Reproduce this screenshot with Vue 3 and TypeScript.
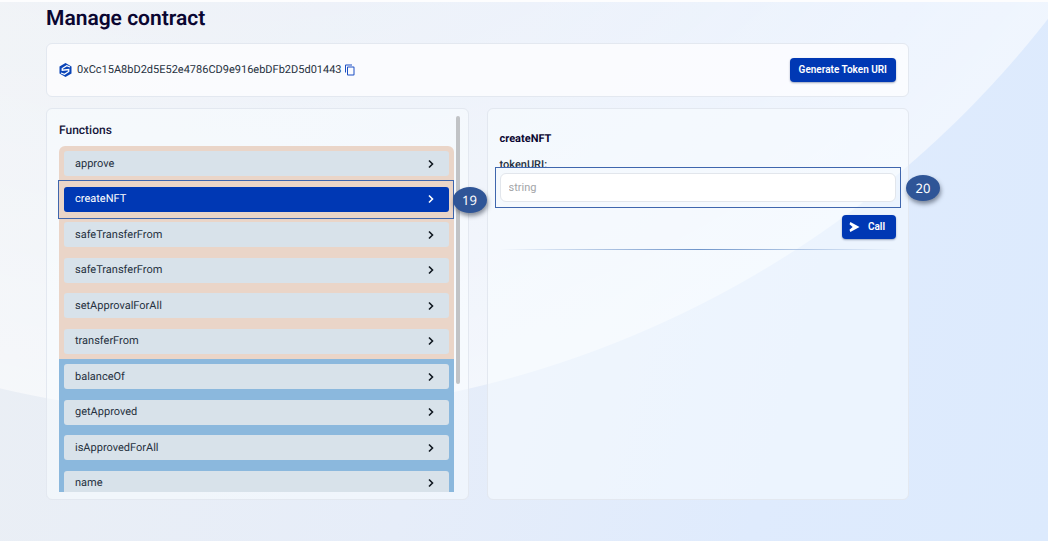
<script setup lang="ts">
import { computed, onMounted, ref } from 'vue'

interface ContractGroup {
  kind: 'write' | 'read'
  items: string[]
}

const address = '0xCc15A8bD2d5E52e4786CD9e916ebDFb2D5d01443'
const groups: ContractGroup[] = [
  {
    kind: 'write',
    items: ['approve', 'createNFT', 'safeTransferFrom', 'safeTransferFrom', 'setApprovalForAll', 'transferFrom'],
  },
  { kind: 'read', items: ['balanceOf', 'getApproved', 'isApprovedForAll', 'name'] },
]

const selected = ref('write-1')
const selectedName = computed(() => {
  const [kind, index] = selected.value.split('-')
  return groups.find((g) => g.kind === kind)?.items[Number(index)] ?? ''
})
const tokenUri = ref('')

const scroller = ref<HTMLElement | null>(null)
const thumb = ref({ height: '0%', top: '0%' })

function updateThumb(): void {
  const el = scroller.value
  if (!el) return
  thumb.value = {
    height: `${(el.clientHeight / el.scrollHeight) * 100}%`,
    top: `${(el.scrollTop / el.scrollHeight) * 100}%`,
  }
}

function copyAddress(): void {
  void navigator.clipboard?.writeText(address)
}

onMounted(updateThumb)
</script>

<template>
  <main class="page">
    <h1 class="title">Manage contract</h1>

    <section class="card address-bar">
      <svg class="logo" viewBox="0 0 26 28" aria-hidden="true">
        <path d="M13 0 25 7v14l-12 7L1 21V7z" fill="#0b45b8" />
        <path d="M22 8 15.500 5.500 6.500 11v3.500L19.500 13v4L11 22.500 4 20" fill="none" stroke="#fff" stroke-width="2.600" />
      </svg>
      <span class="address">{{ address }}</span>
      <button class="copy" type="button" aria-label="Copy address" @click="copyAddress">
        <svg viewBox="0 0 24 24" aria-hidden="true">
          <path
            fill="#1a4fc4"
            d="M16 1H4a2 2 0 0 0-2 2v14h2V3h12V1zm3 4H8a2 2 0 0 0-2 2v14a2 2 0 0 0 2 2h11a2 2 0 0 0 2-2V7a2 2 0 0 0-2-2zm0 16H8V7h11v14z"
          />
        </svg>
      </button>
      <button class="primary generate" type="button">Generate Token URI</button>
    </section>

    <div class="columns">
      <section class="card functions">
        <div ref="scroller" class="scroller" @scroll="updateThumb">
          <h2 class="heading">Functions</h2>
          <div v-for="group in groups" :key="group.kind" class="group" :class="group.kind">
            <button
              v-for="(item, i) in group.items"
              :key="i"
              type="button"
              class="item"
              :class="{ active: selected === `${group.kind}-${i}` }"
              @click="selected = `${group.kind}-${i}`"
            >
              <span>{{ item }}</span>
              <svg class="chevron" viewBox="0 0 10 10" aria-hidden="true">
                <path d="M3 1.500 6.500 5 3 8.500" fill="none" stroke="currentColor" stroke-width="1.600" />
              </svg>
            </button>
          </div>
        </div>
        <div class="track" aria-hidden="true"><div class="thumb" :style="thumb"></div></div>
        <div class="outline step-list"><span class="badge">19</span></div>
      </section>

      <section class="card details">
        <h2 class="name">{{ selectedName }}</h2>
        <label class="label" for="token-uri">tokenURI:</label>
        <div class="field">
          <input id="token-uri" v-model="tokenUri" type="text" placeholder="string" />
          <div class="outline step-field"><span class="badge">20</span></div>
        </div>
        <button class="primary call" type="button">
          <svg viewBox="0 0 12 12" aria-hidden="true">
            <path d="M1.500 0 11.500 5.500 1.500 11 .5 8.500 4 5.500 .5 2.500z" fill="#fff" />
          </svg>
          Call
        </button>
        <hr class="divider" />
      </section>
    </div>
  </main>
</template>

<style>
body {
  margin: 0;
}
</style>

<style scoped>
.page {
  box-sizing: border-box;
  min-height: 100vh;
  padding: 5px 139px 40px 46px;
  overflow: hidden;
  border-top: 2px solid #fdfdfe;
  font-family: Roboto, "Liberation Sans", sans-serif;
  font-size: 11px;
  text-rendering: geometricPrecision;
  color: #263140;
  background:
    radial-gradient(
        circle 1032px at 235px -618px,
        rgba(255, 255, 255, 0.25) 60%,
        rgba(255, 255, 255, 0.55) 1031px,
        transparent 1032px
      )
      no-repeat,
    linear-gradient(105deg, #ebeff4 0%, #e6edf9 45%, #dfebfd 75%, #dceafd 100%);
}
.title {
  margin: 0;
  font-size: 21px;
  font-weight: 600;
  line-height: 24px;
  color: #0a0631;
}
.card {
  box-sizing: border-box;
  border: 1px solid #e3e8f0;
  border-radius: 6px;
  background: rgba(250, 253, 255, 0.5);
}
.address-bar {
  display: flex;
  align-items: center;
  height: 54px;
  margin: 12px 0 11px;
  padding: 0 12px;
  background: rgba(253, 254, 255, 0.75);
}
.logo {
  width: 13px;
  height: 14px;
  margin-right: 5px;
}
.address {
  font-size: 11px;
  line-height: 16px;
}
.copy {
  display: flex;
  margin-left: 2px;
  padding: 0;
  border: 0;
  background: none;
}
.copy svg {
  width: 12px;
  height: 12px;
}
.primary {
  border: 0;
  border-radius: 4px;
  color: #fff;
  font: 600 10px/24px Roboto, "Liberation Sans", sans-serif;
  background: #0038b4;
  box-shadow: 0 1px 2px rgba(20, 40, 90, 0.4);
}
.generate {
  margin-left: auto;
  padding: 0 9px;
}
.columns {
  display: grid;
  grid-template-columns: 1fr 1fr;
  gap: 18px;
  min-height: 392px;
}
.functions {
  position: relative;
  z-index: 1;
  padding: 7px 14px 7px 12px;
}
.scroller {
  height: 376px;
  overflow: auto;
  scrollbar-width: none;
}
.heading {
  margin: 0;
  padding: 6px 0 8px;
  font-size: 12px;
  font-weight: 500;
  line-height: 16px;
  color: #15163a;
}
.group {
  display: grid;
  align-items: center;
  padding: 0 5px;
}
.write {
  grid-template-rows: repeat(6, 1fr);
  height: 213px;
  border-radius: 6px 6px 0 0;
  background: #ead5c8;
}
.read {
  grid-template-rows: repeat(8, 1fr);
  height: 284px;
  background: #8bb8dd;
}
.item {
  display: flex;
  align-items: center;
  justify-content: space-between;
  height: 25px;
  padding: 0 13px 0 11px;
  border: 0;
  border-radius: 3px;
  font: 400 11px/16px Roboto, "Liberation Sans", sans-serif;
  color: #263140;
  text-align: left;
  text-rendering: geometricPrecision;
  background: #d8e2ea;
}
.item.active {
  color: #fff;
  background: #0038b4;
}
.chevron {
  width: 10px;
  height: 10px;
  color: #101820;
}
.active .chevron {
  color: #fff;
}
.track {
  position: absolute;
  top: 7px;
  right: 8px;
  bottom: 7px;
  width: 4px;
}
.thumb {
  position: relative;
  border-radius: 2px;
  background: #c1c3c6;
}
.outline {
  position: absolute;
  border: 1px solid #3f66ad;
  pointer-events: none;
}
.step-list {
  top: 71px;
  left: 11px;
  right: 14px;
  height: 37px;
}
.step-field {
  inset: -6px -5px;
}
.badge {
  position: absolute;
  top: 50%;
  left: 100%;
  width: 34px;
  height: 26px;
  margin-top: -13px;
  border-radius: 50%;
  font: 400 13px/26px "Noto Sans", "Open Sans", sans-serif;
  color: #fff;
  text-align: center;
  background: #2f5597;
  box-shadow: 1px 3px 4px rgba(30, 40, 60, 0.5);
}
.step-field .badge {
  margin-left: 6px;
}
.details {
  display: flex;
  flex-direction: column;
  padding: 22px 12px 12px;
}
.name {
  margin: 0 0 10px;
  font-size: 11px;
  font-weight: 700;
  line-height: 16px;
  color: #0a0631;
}
.label {
  font-weight: 500;
  line-height: 16px;
}
.field {
  position: relative;
}
.field input {
  display: block;
  box-sizing: border-box;
  width: 100%;
  height: 29px;
  padding: 0 8px;
  border: 1px solid #e2e6ec;
  border-radius: 6px;
  font: 400 11px/16px Roboto, "Liberation Sans", sans-serif;
  color: #263140;
  background: #fff;
}
.field input::placeholder {
  color: #a3a5a8;
  opacity: 1;
}
.call {
  display: flex;
  align-items: center;
  align-self: flex-end;
  gap: 8px;
  margin-top: 13px;
  padding: 0 11px 0 7px;
}
.call svg {
  width: 11px;
  height: 11px;
}
.divider {
  width: 100%;
  height: 1px;
  margin: 10px 0 0;
  border: 0;
  background: linear-gradient(90deg, transparent, #6f95ca 50%, transparent);
}
</style>
